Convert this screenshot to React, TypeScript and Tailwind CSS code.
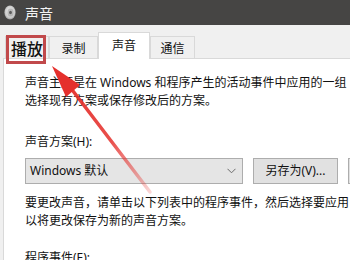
import React from "react";

const TABS = [
  { label: "播放", w: "w-[44px]", active: false, big: true },
  { label: "录制", w: "w-[49px]", active: false, big: false },
  { label: "声音", w: "w-[52px]", active: true, big: false },
  { label: "通信", w: "w-[45px]", active: false, big: false },
];

function SpeakerIcon() {
  return (
    <svg width="12" height="15" viewBox="0 0 12 15">
      <defs>
        <radialGradient id="spk" cx="50%" cy="45%" r="60%">
          <stop offset="0%" stopColor="#ffffff" />
          <stop offset="70%" stopColor="#c9c9c9" />
          <stop offset="100%" stopColor="#8a8a8a" />
        </radialGradient>
      </defs>
      <ellipse cx="6" cy="7.5" rx="5.6" ry="7" fill="url(#spk)" />
      <ellipse cx="6.5" cy="7.5" rx="3" ry="4" fill="#9a9a9a" opacity="0.6" />
      <ellipse cx="6.5" cy="7.5" rx="1.4" ry="1.8" fill="#5c5c5c" />
    </svg>
  );
}

export default function App() {
  return (
    <div className="relative h-[260px] w-[350px] overflow-hidden bg-[#f0f0f0] font-['Segoe_UI','Noto_Sans','Noto_Sans_CJK_SC',sans-serif] text-[12px] text-[#111]">
      {/* title bar */}
      <div className="flex h-[25px] items-center bg-[#464544] pl-[4px]">
        <SpeakerIcon />
        <span className="ml-[9px] font-['Noto_Sans_CJK_SC',sans-serif] text-[14px] leading-none text-[#f4f4f4]">
          声音
        </span>
      </div>

      {/* tabs */}
      <div className="flex h-[33px] items-end pl-[5px]">
        {TABS.map((t) => (
          <div
            key={t.label}
            className={`relative flex items-center justify-center border border-b-0 border-[#d9d9d9] ${t.w} ${
              t.active ? "z-10 -mb-px h-[27px] bg-white pb-[2px]" : "h-[22px] bg-[#f0f0f0]"
            }`}
          >
            <span
              className={`font-['Noto_Sans_CJK_SC',sans-serif] leading-none ${
                t.big ? "text-[16px] font-medium" : "text-[12px]"
              }`}
            >
              {t.label}
            </span>
          </div>
        ))}
      </div>

      {/* panel */}
      <div className="ml-[3px] h-[202px] border-l border-t border-[#d9d9d9] bg-white pl-[21px] pt-[15px] leading-[18px]">
        <div className="whitespace-nowrap">声音主题是在 Windows 和程序产生的活动事件中应用的一组</div>
        <div className="whitespace-nowrap">选择现有方案或保存修改后的方案。</div>

        <div className="mt-[23px]">声音方案(H):</div>

        <div className="mt-[7px] flex items-center gap-[10px]">
          <div className="flex h-[26px] w-[218px] shrink-0 items-center justify-between border border-[#adadad] bg-[#e5e5e5] pl-[4px] pr-[6px]">
            <span>Windows 默认</span>
            <svg width="9" height="6" viewBox="0 0 9 6">
              <path d="M0.5 0.8 L4.5 4.8 L8.5 0.8" fill="none" stroke="#6b6b6b" strokeWidth="1" />
            </svg>
          </div>
          <div className="flex h-[26px] w-[85px] shrink-0 items-center justify-center border border-[#adadad] bg-[#e1e1e1]">
            另存为(V)...
          </div>
          <div className="h-[26px] w-[20px] shrink-0 border border-[#adadad] bg-[#e1e1e1]" />
        </div>

        <div className="mt-[10px] whitespace-nowrap">要更改声音，请单击以下列表中的程序事件，然后选择要应用</div>
        <div className="whitespace-nowrap">以将更改保存为新的声音方案。</div>

        <div className="mt-[19px]">程序事件(E):</div>
      </div>

      {/* annotation: red box around 播放 */}
      <div className="absolute left-[6px] top-[35px] h-[29px] w-[40px] border-[3px] border-[#c1494b]" />

      {/* annotation: arrow */}
      <svg className="pointer-events-none absolute left-0 top-0" width="350" height="260" viewBox="0 0 350 260">
        <defs>
          <linearGradient id="arw" x1="52" y1="66" x2="150" y2="192" gradientUnits="userSpaceOnUse">
            <stop offset="0%" stopColor="#e5302c" stopOpacity="1" />
            <stop offset="60%" stopColor="#e5302c" stopOpacity="0.85" />
            <stop offset="100%" stopColor="#e5302c" stopOpacity="0.2" />
          </linearGradient>
        </defs>
        <polygon points="52,66 80,85 66,97" fill="#e5302c" />
        <line x1="73" y1="91" x2="150" y2="192" stroke="url(#arw)" strokeWidth="3.5" strokeLinecap="round" />
      </svg>
    </div>
  );
}
